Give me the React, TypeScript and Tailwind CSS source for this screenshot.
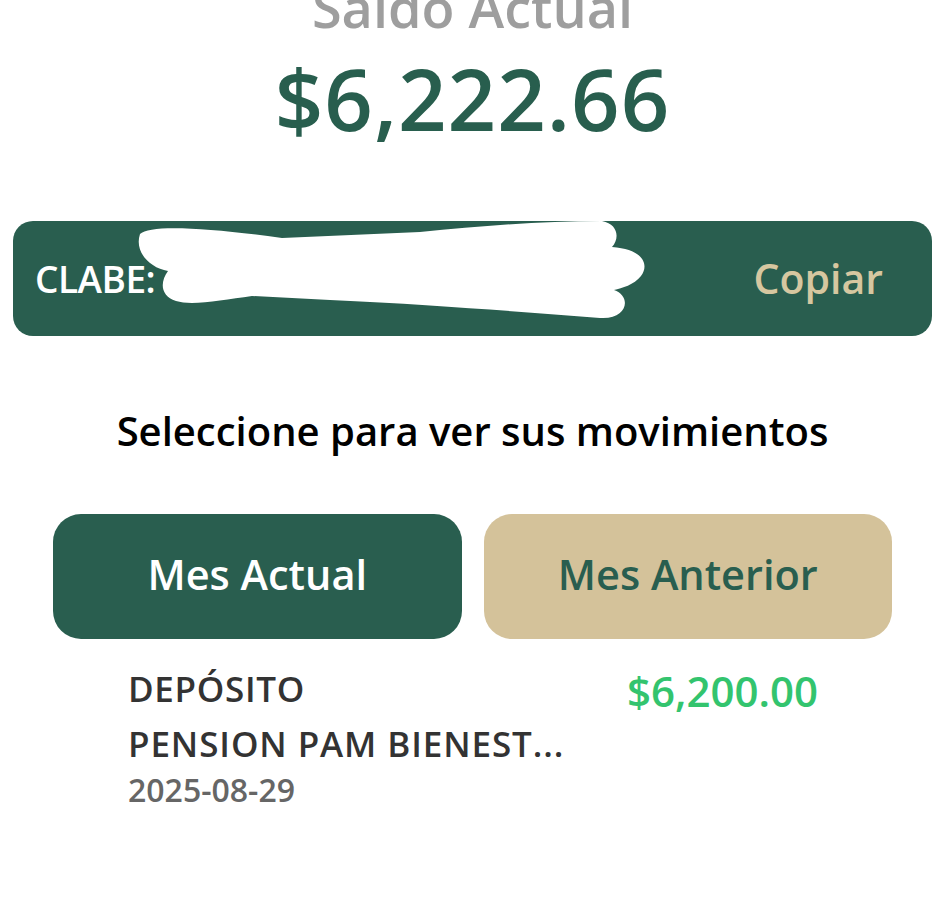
import { useState } from 'react';

const font = { fontFamily: '"Open Sans", "Noto Sans", sans-serif' };

function Redaction() {
  // white scribble over the account number
  return (
    <svg
      className="absolute left-[117px] top-[-6px] pointer-events-none"
      width="530"
      height="110"
      viewBox="130 215 530 110"
    >
      <path
        d="M140 234 C150 224 210 228 282 238 L420 232 C480 226 540 221 602 221 C618 224 620 238 612 247 C642 249 650 264 641 276 C634 285 622 288 614 290 C632 296 628 320 600 318 C520 312 440 305 330 300 L252 296 C222 300 192 306 176 301 C160 296 160 282 168 271 C150 268 134 252 140 234 Z"
        fill="#ffffff"
      />
    </svg>
  );
}

export default function App() {
  const [tab, setTab] = useState<'actual' | 'anterior'>('actual');

  return (
    <div className="w-[945px] h-[904px] bg-white overflow-hidden" style={font}>
      <div className="flex flex-col items-center">
        <h2 className="mt-[-20px] text-[54px] leading-none font-semibold text-[#9e9e9e]">Saldo Actual</h2>
        <div className="mt-[22px] text-[85px] leading-none font-semibold text-[#285e4e] tracking-[1px]">$6,222.66</div>
      </div>

      <div className="relative mx-[13px] mt-[80px] h-[115px] rounded-[20px] bg-[#295e4f] flex items-center justify-between pl-[22px] pr-[49px]">
        <span className="text-[37px] font-semibold text-white tracking-[-0.5px]">CLABE:</span>
        <button className="text-[41px] font-semibold text-[#d6c7a0]">Copiar</button>
        <Redaction />
      </div>

      <p className="mt-[75px] text-center text-[40px] leading-none font-semibold text-black">
        Seleccione para ver sus movimientos
      </p>

      <div className="mt-[63px] px-[53px] grid grid-cols-2 gap-[22px]">
        <button
          onClick={() => setTab('actual')}
          className={
            'h-[125px] pb-[5px] rounded-[28px] text-[41.5px] font-semibold ' +
            (tab === 'actual' ? 'bg-[#295e4f] text-white' : 'bg-[#d4c29a] text-[#295e4f]')
          }
        >
          Mes Actual
        </button>
        <button
          onClick={() => setTab('anterior')}
          className={
            'h-[125px] pb-[5px] rounded-[28px] text-[41.5px] font-semibold ' +
            (tab === 'anterior' ? 'bg-[#295e4f] text-white' : 'bg-[#d4c29a] text-[#295e4f]')
          }
        >
          Mes Anterior
        </button>
      </div>

      <div className="mt-[22px] pl-[128px] pr-[127px] flex justify-between">
        <div className="flex flex-col">
          <span className="text-[35px] leading-[55px] font-semibold tracking-[0.7px] text-[#333333]">DEPÓSITO</span>
          <span className="text-[35px] leading-[55px] font-semibold tracking-[0.9px] text-[#333333]">PENSION PAM BIENEST...</span>
          <span className="text-[32px] leading-[38px] font-semibold text-[#666666]">2025-08-29</span>
        </div>
        <span className="text-[42px] leading-[60px] font-semibold text-[#33c46e]">$6,200.00</span>
      </div>
    </div>
  );
}
